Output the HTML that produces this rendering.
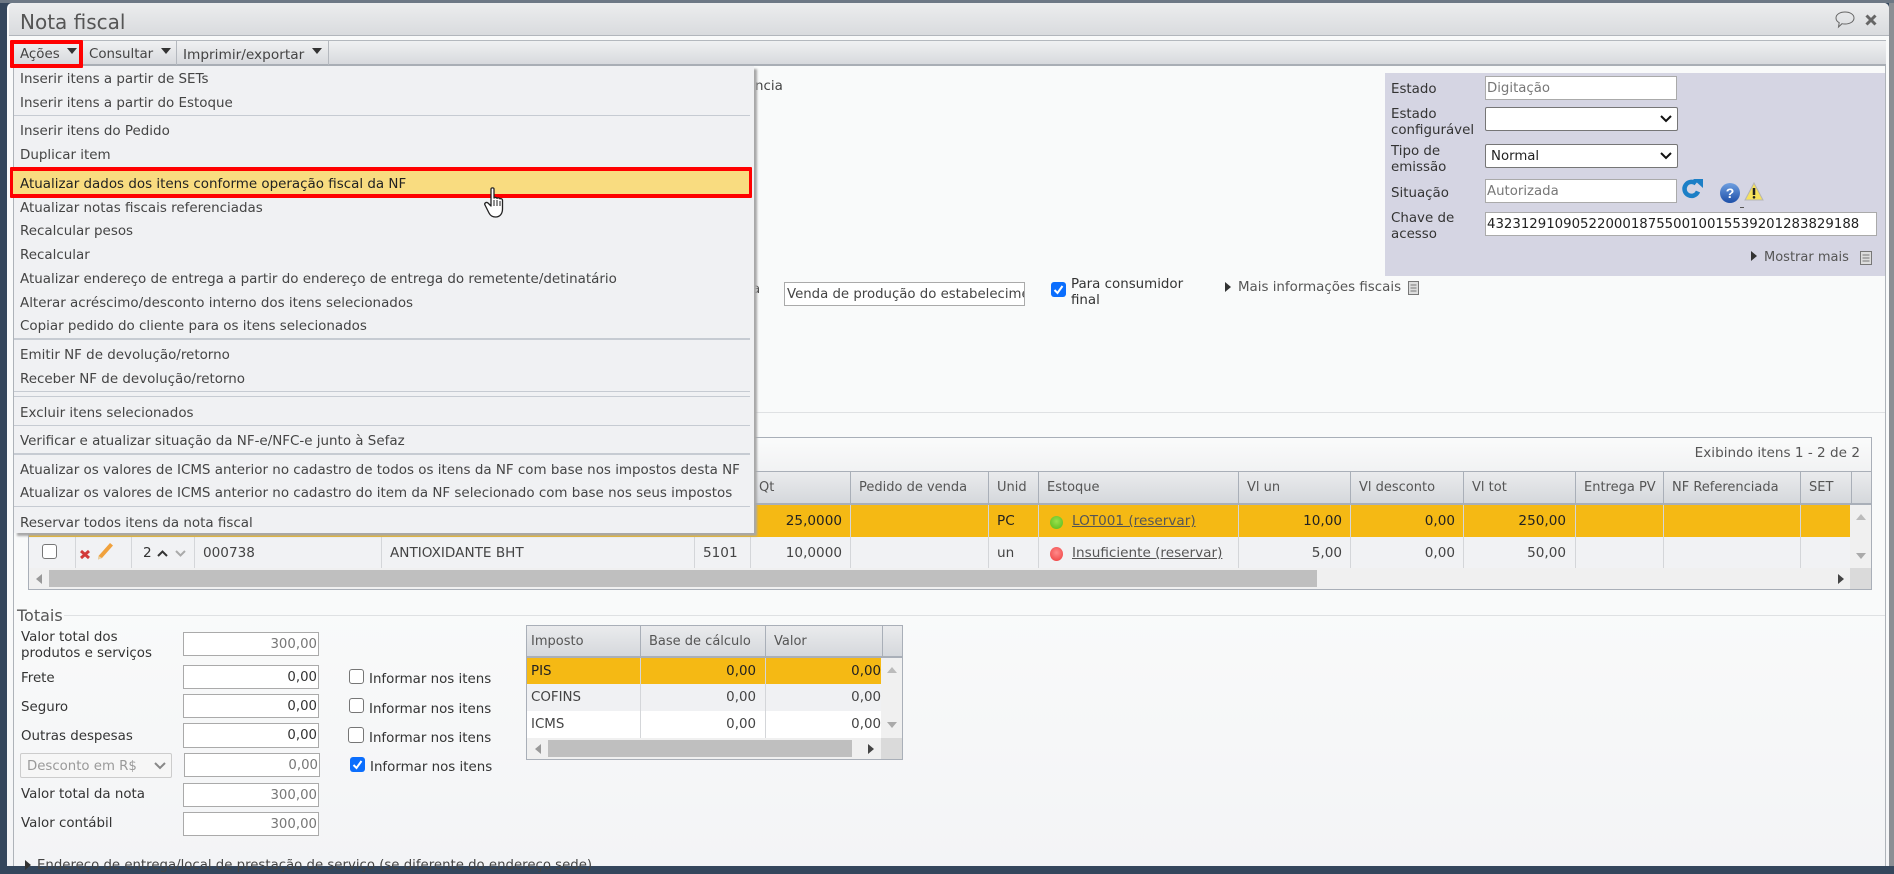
<!DOCTYPE html>
<html lang="pt"><head><meta charset="utf-8"><title>Nota fiscal</title>
<style>
html,body{margin:0;padding:0}
body{width:1894px;height:866px;position:relative;overflow:hidden;background:#34465c;font:13px "DejaVu Sans",Verdana,sans-serif;color:#444}
div,span,a{position:absolute;white-space:nowrap;box-sizing:border-box}
.t{line-height:16px;height:16px}
.g{font-size:13.6px}
.b{font-size:13.4px}
.r{text-align:right}
.m{left:20px;line-height:16px;height:16px;color:#444;font-size:13.45px}
.s{left:14px;width:736px;background:#c6cbd2}
.l{line-height:16px;color:#333;font-size:13.4px}
.i{background:#fff;border:1px solid #aaa;height:24px;line-height:24px;padding:0 1px;font-size:13.3px;color:#777;overflow:hidden}
.h{top:471px;height:34px;background:linear-gradient(#eaebed,#d5d8dc);border-left:1px solid #a9afb8;border-top:1px solid #a9afb8;border-bottom:2px solid #a9afb8;line-height:32px;padding-left:8px;color:#555;font-size:13px}
.c{width:1px;background:#d4d6d9}
.cb{width:15px;height:15px;border:1.5px solid #767676;border-radius:3px;background:#fff}
.cbc{width:15px;height:15px;border-radius:3px;background:#0b6efd}
.sel{background:#fff;border:1px solid #767676;border-radius:2px;height:24px;line-height:24px;padding-left:5px;font-size:13.3px;color:#222}
svg{position:absolute;overflow:visible}
</style></head><body>
<div style="left:0;top:0;width:1894px;height:3px;background:#6d7885"></div>
<div style="left:1889px;top:3px;width:5px;height:863px;background:#8b8f94"></div>
<!-- window -->
<div style="left:7px;top:3px;width:1882px;height:863px;background:linear-gradient(#f9fafa,#f9fafa 70%,#f3f4f6);border-radius:5px 5px 0 0"></div>
<div style="left:9px;top:3px;width:1880px;height:33px;background:linear-gradient(#ecedee,#d9dbde);border-bottom:1px solid #b2b6bc;border-radius:5px 5px 0 0"></div>
<div class="t" style="left:20px;top:10px;height:24px;line-height:24px;font-size:20px;color:#555">Nota fiscal</div>
<svg style="left:1835px;top:10px" width="20" height="20" viewBox="0 0 20 20"><path d="M10 2c5 0 9 2.300 9 6s-4 6-9 6c-1 0-2 0-3-.3L3.500 17l.7-4.300C2 11.500 1 10 1 8c0-3.700 4-6 9-6z" fill="none" stroke="#666" stroke-width="1"/></svg>
<svg style="left:1865px;top:14px" width="12" height="12" viewBox="0 0 12 12"><path d="M1.500 1.500l9 9M10.500 1.500l-9 9" stroke="#666" stroke-width="3"/></svg>
<!-- content frame -->
<div style="left:13px;top:40px;width:1873px;height:826px;border-left:1px solid #aeb3b9;border-right:1px solid #aeb3b9"></div>
<!-- toolbar -->
<div style="left:13px;top:40px;width:1873px;height:26px;background:linear-gradient(#f0f1f2,#d7d9dd);border-top:1px solid #b4b8be;border-bottom:2px solid #a9aeb5"></div>
<div class="t b" style="left:20px;top:47px">Ações</div>
<svg style="left:67px;top:48px" width="10" height="6"><path d="M0 0h10L5 6z" fill="#333"/></svg>
<div class="t b" style="left:89px;top:47px">Consultar</div>
<svg style="left:161px;top:48px" width="10" height="6"><path d="M0 0h10L5 6z" fill="#333"/></svg>
<div class="t" style="left:183px;top:47px;font-size:13.7px">Imprimir/exportar</div>
<svg style="left:312px;top:48px" width="10" height="6"><path d="M0 0h10L5 6z" fill="#333"/></svg>
<div style="left:176px;top:41px;width:1px;height:24px;background:#b4b8be"></div>
<div style="left:328px;top:41px;width:1px;height:24px;background:#b4b8be"></div>
<!-- behind menu -->
<div class="t b" style="left:755px;top:79px">ncia</div>
<div class="t b" style="left:752px;top:282px">a</div>
<!-- right panel -->
<div style="left:1385px;top:73px;width:500px;height:203px;background:#d5d5e3"></div>
<div class="l" style="left:1391px;top:82px">Estado</div>
<div class="l" style="left:1391px;top:107px">Estado<br>configurável</div>
<div class="l" style="left:1391px;top:144px">Tipo de<br>emissão</div>
<div class="l" style="left:1391px;top:186px">Situação</div>
<div class="l" style="left:1391px;top:211px">Chave de<br>acesso</div>
<div class="i" style="left:1485px;top:76px;width:192px">Digitação</div>
<div class="sel" style="left:1485px;top:107px;width:193px"></div>
<svg style="left:1660px;top:115px" width="12" height="8"><path d="M1 1l5 5 5-5" fill="none" stroke="#111" stroke-width="2"/></svg>
<div class="sel" style="left:1485px;top:144px;width:193px">Normal</div>
<svg style="left:1660px;top:152px" width="12" height="8"><path d="M1 1l5 5 5-5" fill="none" stroke="#111" stroke-width="2"/></svg>
<div class="i" style="left:1485px;top:179px;width:192px">Autorizada</div>
<svg style="left:1682px;top:178px" width="21" height="21" viewBox="0 0 21 21"><path d="M16 13.500A7 7 0 1 1 14 5.500" fill="none" stroke="#1c7fc6" stroke-width="4.500"/><path d="M11 1h10v9z" fill="#1c7fc6"/></svg>
<svg style="left:1720px;top:183px" width="20" height="20" viewBox="0 0 20 20"><defs><linearGradient id="q" x1="0" y1="0" x2="0" y2="1"><stop offset="0" stop-color="#6f9fe0"/><stop offset="1" stop-color="#1d4fa8"/></linearGradient></defs><circle cx="10" cy="10" r="10" fill="url(#q)"/><text x="10" y="15" text-anchor="middle" font-family="Liberation Sans" font-weight="bold" font-size="14" fill="#fff">?</text></svg>
<div style="left:1740px;top:207px;width:4px;height:1px;background:#555"></div>
<svg style="left:1744px;top:182px" width="20" height="19" viewBox="0 0 20 19"><path d="M10 1l9 17H1z" fill="#f7e25c" stroke="#b5b5b5" stroke-width="1"/><path d="M10 6v7" stroke="#222" stroke-width="2.500"/><circle cx="10" cy="15.300" r="1.300" fill="#222"/></svg>
<div class="i" style="left:1485px;top:212px;width:392px;color:#222">43231291090522000187550010015539201283829188</div>
<svg style="left:1751px;top:251px" width="6" height="10"><path d="M0 0l6 5-6 5z" fill="#333"/></svg>
<div class="t" style="left:1764px;top:250px;font-size:13px;color:#555">Mostrar mais</div>
<svg style="left:1860px;top:251px" width="12" height="14"><path d="M.5.5h11v13H.5z" fill="#ddd" stroke="#777"/><path d="M2.500 4h7M2.500 7h7M2.500 10h7" stroke="#777"/></svg>
<!-- middle -->
<div class="i" style="left:784px;top:282px;width:241px;color:#444;padding-left:2px">Venda de produção do estabelecimento</div>
<div class="cbc" style="left:1051px;top:282px"></div>
<svg style="left:1051px;top:282px" width="15" height="15"><path d="M3.500 8l3 3 5-7" fill="none" stroke="#fff" stroke-width="2"/></svg>
<div class="t b" style="left:1071px;top:277px;color:#333;height:32px">Para consumidor<br>final</div>
<svg style="left:1225px;top:282px" width="6" height="10"><path d="M0 0l6 5-6 5z" fill="#333"/></svg>
<div class="t b" style="left:1238px;top:280px;color:#555">Mais informações fiscais</div>
<svg style="left:1408px;top:281px" width="11" height="14"><path d="M.5.5h10v13H.5z" fill="#ddd" stroke="#777"/><path d="M2.500 4h6M2.500 7h6M2.500 10h6" stroke="#777"/></svg>
<div style="left:14px;top:412px;width:1871px;height:1px;background:#dfe1e3"></div>
<!-- main grid -->
<div style="left:28px;top:437px;width:1844px;height:153px;background:linear-gradient(#fafbfb,#f1f2f3 34px);border:1px solid #a9afb8"></div>
<div class="t r g" style="left:1600px;width:260px;top:445px;color:#555">Exibindo itens 1 - 2 de 2</div>
<div class="h" style="left:750px;width:101px">Qt</div>
<div class="h" style="left:850px;width:138px">Pedido de venda</div>
<div class="h" style="left:988px;width:50px">Unid</div>
<div class="h" style="left:1038px;width:200px">Estoque</div>
<div class="h" style="left:1238px;width:112px">Vl un</div>
<div class="h" style="left:1350px;width:113px">Vl desconto</div>
<div class="h" style="left:1463px;width:112px">Vl tot</div>
<div class="h" style="left:1575px;width:88px">Entrega PV</div>
<div class="h" style="left:1663px;width:137px">NF Referenciada</div>
<div class="h" style="left:1800px;width:51px">SET</div>
<div class="h" style="left:1851px;width:20px;padding:0"></div>
<div style="left:29px;top:505px;width:1821px;height:32px;background:#f5b914"></div>
<div style="left:29px;top:537px;width:1821px;height:31px;background:#f1f2f4"></div>
<div style="left:1850px;top:505px;width:21px;height:63px;background:#f0f0f0"></div>
<svg style="left:1856px;top:514px" width="10" height="6"><path d="M0 6h10L5 0z" fill="#bbb"/></svg>
<svg style="left:1856px;top:553px" width="10" height="6"><path d="M0 0h10L5 6z" fill="#aaa"/></svg>
<div class="c" style="left:75px;top:537px;height:31px"></div>
<div class="c" style="left:131px;top:537px;height:31px"></div>
<div class="c" style="left:194px;top:537px;height:31px"></div>
<div class="c" style="left:381px;top:537px;height:31px"></div>
<div class="c" style="left:694px;top:537px;height:31px"></div>
<div class="c" style="left:750px;top:537px;height:31px"></div>
<div class="c" style="left:850px;top:505px;height:63px"></div>
<div class="c" style="left:988px;top:505px;height:63px"></div>
<div class="c" style="left:1038px;top:505px;height:63px"></div>
<div class="c" style="left:1238px;top:505px;height:63px"></div>
<div class="c" style="left:1350px;top:505px;height:63px"></div>
<div class="c" style="left:1463px;top:505px;height:63px"></div>
<div class="c" style="left:1575px;top:505px;height:63px"></div>
<div class="c" style="left:1663px;top:505px;height:63px"></div>
<div class="c" style="left:1800px;top:505px;height:63px"></div>
<div class="t r g" style="left:760px;width:82px;top:513px;color:#222">25,0000</div>
<div class="t g" style="left:997px;top:513px;color:#222">PC</div>
<div style="left:1050px;top:516px;width:13px;height:13px;border-radius:50%;background:radial-gradient(circle at 50% 40%,#9be04a,#55b81a)"></div>
<a class="t g" style="left:1072px;top:513px;color:#555;text-decoration:underline">LOT001 (reservar)</a>
<div class="t r g" style="left:1260px;width:82px;top:513px;color:#222">10,00</div>
<div class="t r g" style="left:1370px;width:85px;top:513px;color:#222">0,00</div>
<div class="t r g" style="left:1480px;width:86px;top:513px;color:#222">250,00</div>
<div class="cb" style="left:42px;top:544px"></div>
<svg style="left:80px;top:550px" width="10" height="9"><path d="M1 1l8 7M9 1L1 8" stroke="#d23a3a" stroke-width="3"/></svg>
<svg style="left:97px;top:542px" width="17" height="18" viewBox="0 0 17 18"><path d="M13 1l3 2.500L5 16l-4 1.500L1.500 14z" fill="#f0a13c"/><path d="M1.500 14L1 17.500 5 16z" fill="#e8d3a8"/></svg>
<div class="t g" style="left:143px;top:545px;color:#333">2</div>
<svg style="left:157px;top:550px" width="11" height="7"><path d="M1 6l4.500-4.500L10 6" fill="none" stroke="#333" stroke-width="2"/></svg>
<svg style="left:175px;top:550px" width="11" height="7"><path d="M1 1l4.500 4.500L10 1" fill="none" stroke="#aaa" stroke-width="2"/></svg>
<div class="t g" style="left:203px;top:545px">000738</div>
<div class="t g" style="left:390px;top:545px">ANTIOXIDANTE BHT</div>
<div class="t g" style="left:703px;top:545px">5101</div>
<div class="t r g" style="left:760px;width:82px;top:545px">10,0000</div>
<div class="t g" style="left:997px;top:545px">un</div>
<div style="left:1050px;top:547px;width:13px;height:14px;border-radius:50%;background:radial-gradient(circle at 50% 40%,#ff8a8a,#ee3b3b)"></div>
<a class="t g" style="left:1072px;top:545px;color:#555;text-decoration:underline">Insuficiente (reservar)</a>
<div class="t r g" style="left:1260px;width:82px;top:545px">5,00</div>
<div class="t r g" style="left:1370px;width:85px;top:545px">0,00</div>
<div class="t r g" style="left:1480px;width:86px;top:545px">50,00</div>
<div style="left:29px;top:568px;width:1821px;height:21px;background:#f0f0f0"></div>
<div style="left:1850px;top:568px;width:21px;height:21px;background:#dadada"></div>
<div style="left:49px;top:570px;width:1268px;height:17px;background:#bfbfbf"></div>
<svg style="left:36px;top:574px" width="6" height="10"><path d="M6 0L0 5l6 5z" fill="#999"/></svg>
<svg style="left:1838px;top:574px" width="6" height="10"><path d="M0 0l6 5-6 5z" fill="#444"/></svg>
<!-- totais -->
<div style="left:64px;top:615px;width:1821px;height:1px;background:#dfe1e3"></div>
<div class="t" style="left:17px;top:606px;height:20px;line-height:20px;font-size:16px;color:#555">Totais</div>
<div class="l" style="left:21px;top:630px">Valor total dos<br>produtos e serviços</div>
<div class="i r" style="left:183px;top:632px;width:136px">300,00</div>
<div class="l" style="left:21px;top:671px">Frete</div>
<div class="i r" style="left:183px;top:665px;width:136px;color:#333">0,00</div>
<div class="l" style="left:21px;top:700px">Seguro</div>
<div class="i r" style="left:183px;top:694px;width:136px;color:#333">0,00</div>
<div class="l" style="left:21px;top:729px">Outras despesas</div>
<div class="i r" style="left:183px;top:723px;width:136px;height:25px;color:#333">0,00</div>
<div style="left:20px;top:753px;width:152px;height:25px;background:#f6f6f6;border:1px solid #ccc;border-radius:2px;line-height:25px;padding-left:6px;font-size:13.3px;color:#999">Desconto em R$</div>
<svg style="left:154px;top:762px" width="12" height="8"><path d="M1 1l5 5 5-5" fill="none" stroke="#888" stroke-width="2"/></svg>
<div class="i r" style="left:184px;top:753px;width:136px">0,00</div>
<div class="l" style="left:21px;top:787px">Valor total da nota</div>
<div class="i r" style="left:183px;top:783px;width:136px">300,00</div>
<div class="l" style="left:21px;top:816px">Valor contábil</div>
<div class="i r" style="left:183px;top:812px;width:136px">300,00</div>
<div class="cb" style="left:349px;top:669px"></div><div class="l" style="left:369px;top:672px">Informar nos itens</div>
<div class="cb" style="left:349px;top:698px"></div><div class="l" style="left:369px;top:702px">Informar nos itens</div>
<div class="cb" style="left:348px;top:727px;width:16px;height:16px"></div><div class="l" style="left:369px;top:731px">Informar nos itens</div>
<div class="cbc" style="left:350px;top:757px"></div>
<svg style="left:350px;top:757px" width="15" height="15"><path d="M3.500 8l3 3 5-7" fill="none" stroke="#fff" stroke-width="2"/></svg>
<div class="l" style="left:370px;top:760px">Informar nos itens</div>
<!-- small grid -->
<div style="left:526px;top:625px;width:377px;height:135px;background:#f0f0f0;border:1px solid #a9afb8"></div>
<div class="h" style="left:526px;top:625px;width:115px;border-left-width:1px;padding-left:4px;height:33px">Imposto</div>
<div class="h" style="left:640px;top:625px;width:126px;height:33px">Base de cálculo</div>
<div class="h" style="left:765px;top:625px;width:118px;height:33px">Valor</div>
<div class="h" style="left:882px;top:625px;width:21px;height:33px;padding:0;border-right:1px solid #a9afb8"></div>
<div style="left:527px;top:658px;width:354px;height:26px;background:#f5b914"></div>
<div style="left:527px;top:684px;width:354px;height:27px;background:#f0f1f3"></div>
<div style="left:527px;top:711px;width:354px;height:27px;background:#fff"></div>
<div class="c" style="left:640px;top:658px;height:80px"></div>
<div class="c" style="left:765px;top:658px;height:80px"></div>
<div class="t b" style="left:531px;top:664px;color:#222">PIS</div>
<div class="t b" style="left:531px;top:690px">COFINS</div>
<div class="t b" style="left:531px;top:717px">ICMS</div>
<div class="t r b" style="left:650px;width:106px;top:664px;color:#222">0,00</div>
<div class="t r b" style="left:650px;width:106px;top:690px">0,00</div>
<div class="t r b" style="left:650px;width:106px;top:717px">0,00</div>
<div class="t r b" style="left:775px;width:106px;top:664px;color:#222">0,00</div>
<div class="t r b" style="left:775px;width:106px;top:690px">0,00</div>
<div class="t r b" style="left:775px;width:106px;top:717px">0,00</div>
<svg style="left:887px;top:667px" width="10" height="6"><path d="M0 6h10L5 0z" fill="#bbb"/></svg>
<svg style="left:887px;top:722px" width="10" height="6"><path d="M0 0h10L5 6z" fill="#aaa"/></svg>
<div style="left:881px;top:738px;width:21px;height:21px;background:#dadada"></div>
<div style="left:548px;top:740px;width:304px;height:17px;background:#bfbfbf"></div>
<svg style="left:535px;top:744px" width="6" height="10"><path d="M6 0L0 5l6 5z" fill="#999"/></svg>
<svg style="left:868px;top:744px" width="6" height="10"><path d="M0 0l6 5-6 5z" fill="#444"/></svg>
<svg style="left:25px;top:860px" width="6" height="10"><path d="M0 0l6 5-6 5z" fill="#333"/></svg>
<div class="t" style="left:37px;top:858px;font-size:13.3px;color:#444">Endereço de entrega/local de prestação de serviço (se diferente do endereço sede)</div>
<!-- menu -->
<div style="left:14px;top:66px;width:740px;height:467px;background:#f0f1f3;box-shadow:3px 3px 2px #a8a8a8"></div>
<div class="m" style="top:72px">Inserir itens a partir de SETs</div>
<div class="m" style="top:96px">Inserir itens a partir do Estoque</div>
<div class="s" style="top:115px;height:1px"></div>
<div class="m" style="top:124px">Inserir itens do Pedido</div>
<div class="m" style="top:148px">Duplicar item</div>
<div style="left:12px;top:169px;width:738px;height:27px;background:#f9dc80"></div>
<div class="m" style="top:177px;color:#222">Atualizar dados dos itens conforme operação fiscal da NF</div>
<div class="m" style="top:201px">Atualizar notas fiscais referenciadas</div>
<div class="m" style="top:224px">Recalcular pesos</div>
<div class="m" style="top:248px">Recalcular</div>
<div class="m" style="top:272px">Atualizar endereço de entrega a partir do endereço de entrega do remetente/detinatário</div>
<div class="m" style="top:296px">Alterar acréscimo/desconto interno dos itens selecionados</div>
<div class="m" style="top:319px">Copiar pedido do cliente para os itens selecionados</div>
<div class="s" style="top:338px;height:2px"></div>
<div class="m" style="top:348px">Emitir NF de devolução/retorno</div>
<div class="m" style="top:372px">Receber NF de devolução/retorno</div>
<div class="s" style="top:391px;height:1px"></div>
<div class="s" style="top:396px;height:1px"></div>
<div class="m" style="top:406px">Excluir itens selecionados</div>
<div class="s" style="top:425px;height:1px"></div>
<div class="m" style="top:434px">Verificar e atualizar situação da NF-e/NFC-e junto à Sefaz</div>
<div class="s" style="top:453px;height:2px"></div>
<div class="m" style="top:463px">Atualizar os valores de ICMS anterior no cadastro de todos os itens da NF com base nos impostos desta NF</div>
<div class="m" style="top:486px">Atualizar os valores de ICMS anterior no cadastro do item da NF selecionado com base nos seus impostos</div>
<div class="s" style="top:506px;height:1px"></div>
<div class="m" style="top:516px">Reservar todos itens da nota fiscal</div>
<!-- red highlights -->
<div style="left:10px;top:40px;width:73px;height:28px;border:4px solid #f00;border-radius:1px"></div>
<div style="left:10px;top:167px;width:742px;height:31px;border-style:solid;border-color:#f00;border-width:4px 3px;border-radius:1px"></div>
<!-- hand cursor -->
<svg style="left:484px;top:187px" width="24" height="32" viewBox="0 0 24 32"><path d="M7 2c0-1.500 3-1.500 3 0v9c1-.8 2.500-.8 3 .3.800-.6 2.200-.5 3 .5 1-.5 2.500 0 2.500 1.500V22c0 4-2 8-7 8-3 0-5-1-6.500-4L1 18c-1-1.500 1-3.500 3-2l3 3z" fill="#fff" stroke="#222" stroke-width="1.300" stroke-linejoin="round"/><path d="M10 13v6M13 13v6M16 14v5" stroke="#222" stroke-width="1"/></svg>
</body></html>
